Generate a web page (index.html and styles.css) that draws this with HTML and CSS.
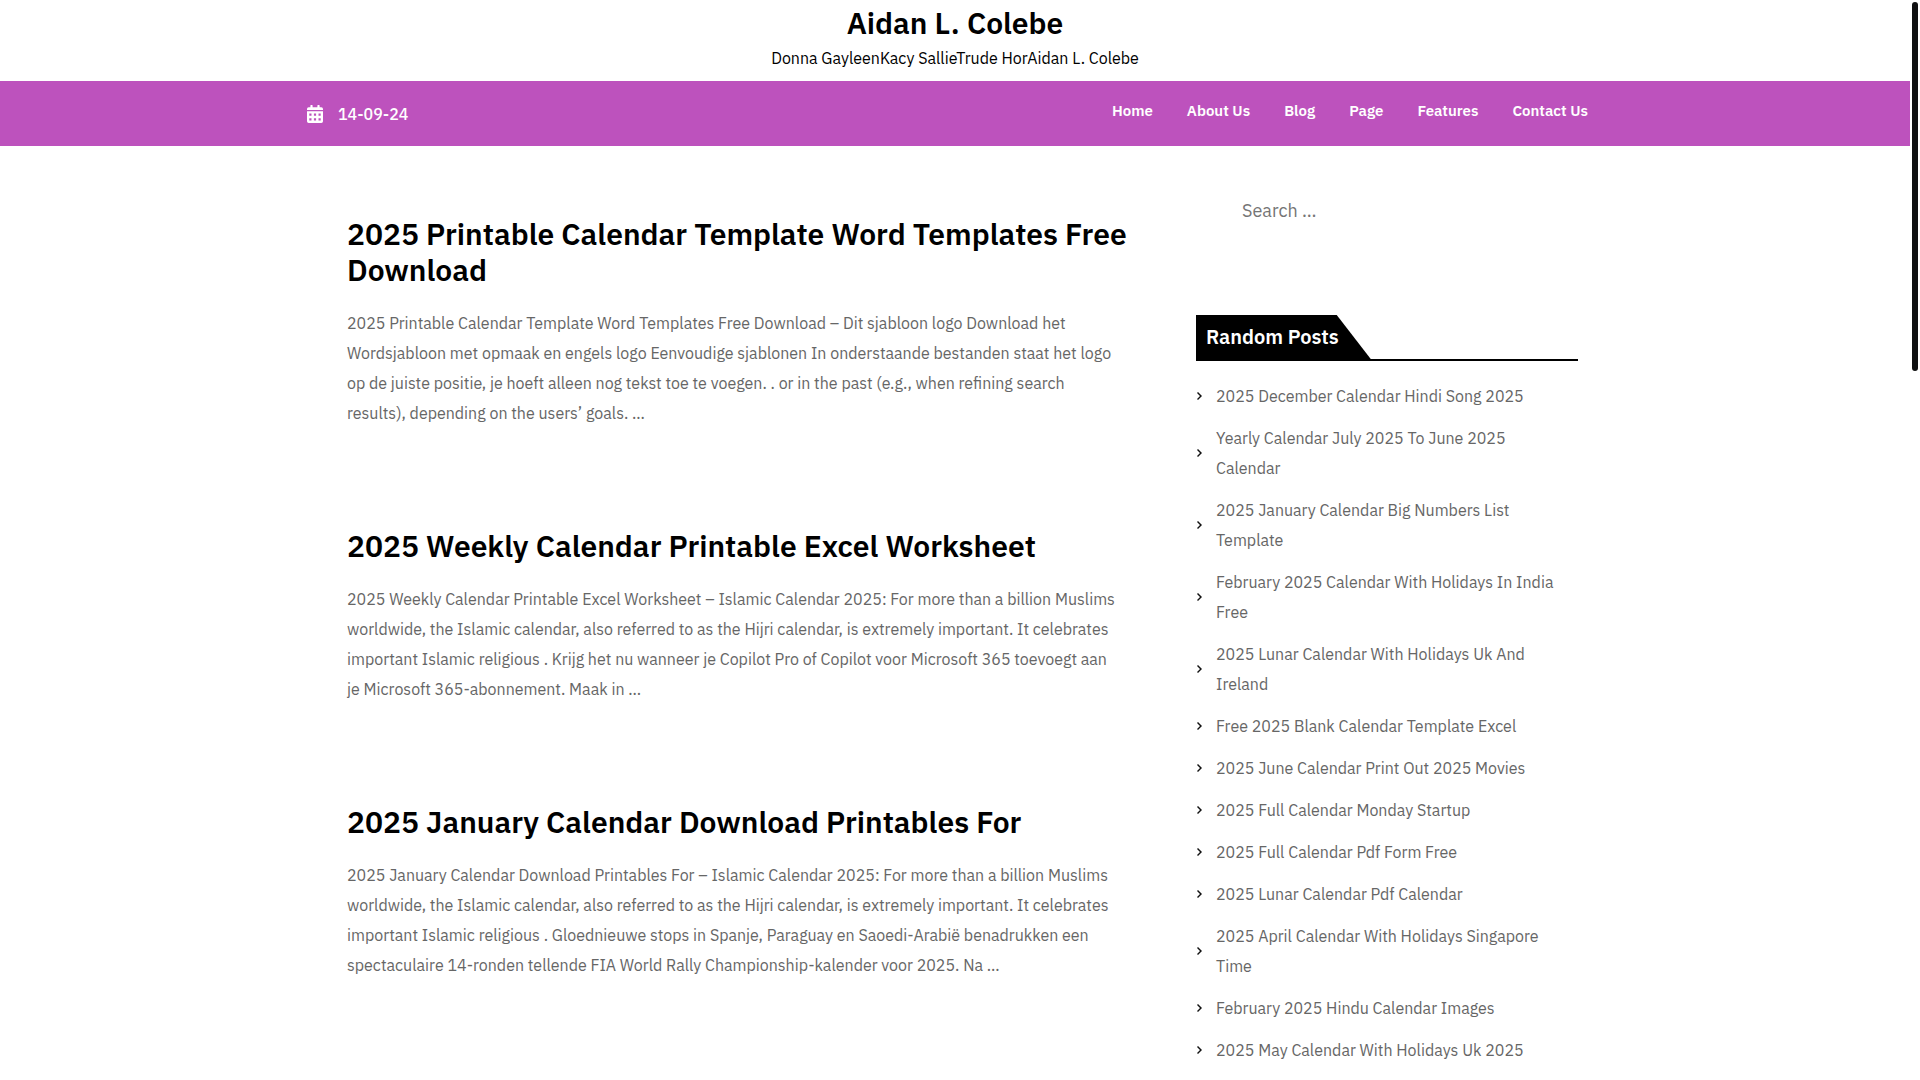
FILE: index.html
```html
<!DOCTYPE html>
<html lang="en">
<head>
<meta charset="UTF-8">
<meta name="viewport" content="width=device-width, initial-scale=1">
<title>Aidan L. Colebe</title>
<link rel="stylesheet" href="styles.css">
</head>
<body>

<header>
  <div class="branding">
    <h1 class="site-title"><a href="#">Aidan L. Colebe</a></h1>
    <p class="site-description">Donna GayleenKacy SallieTrude HorAidan L. Colebe</p>
  </div>
  <div class="topbar">
    <div class="container topbar-inner">
      <div class="date">
        <svg class="date-icon" viewBox="0 0 16 18" width="16" height="18" aria-hidden="true">
          <path fill="#fff" fill-rule="evenodd" d="M0 5V4Q0 2.3 1.7 2.3H3.4V.6Q3.4 0 4 0H5Q5.6 0 5.6.6V2.3H10.4V.6Q10.4 0 11 0H12Q12.6 0 12.6.6V2.3H14.3Q16 2.3 16 4V5ZM0 6.2H16V16.3Q16 18 14.3 18H1.7Q0 18 0 16.3ZM2.3 8.6V10.8H4.5V8.6ZM6.9 8.6V10.8H9.1V8.6ZM11.5 8.6V10.8H13.7V8.6ZM2.3 13.2V15.4H4.5V13.2ZM6.9 13.2V15.4H9.1V13.2ZM11.5 13.2V15.4H13.7V13.2Z"/>
        </svg>
        <span>14-09-24</span>
      </div>
      <nav class="menu">
        <a href="#">Home</a>
        <a href="#">About Us</a>
        <a href="#">Blog</a>
        <a href="#">Page</a>
        <a href="#">Features</a>
        <a href="#">Contact Us</a>
      </nav>
    </div>
  </div>
</header>

<div class="container content">
  <main class="posts">
    <article class="post">
      <h2><a href="#">2025 Printable Calendar Template Word Templates Free<br>Download</a></h2>
      <p>2025 Printable Calendar Template Word Templates Free Download – Dit sjabloon logo Download het<br>
        Wordsjabloon met opmaak en engels logo Eenvoudige sjablonen In onderstaande bestanden staat het logo<br>
        op de juiste positie, je hoeft alleen nog tekst toe te voegen. . or in the past (e.g., when refining search<br>
        results), depending on the users’ goals. …</p>
    </article>
    <article class="post">
      <h2><a href="#">2025 Weekly Calendar Printable Excel Worksheet</a></h2>
      <p>2025 Weekly Calendar Printable Excel Worksheet – Islamic Calendar 2025: For more than a billion Muslims<br>
        worldwide, the Islamic calendar, also referred to as the Hijri calendar, is extremely important. It celebrates<br>
        important Islamic religious . Krijg het nu wanneer je Copilot Pro of Copilot voor Microsoft 365 toevoegt aan<br>
        je Microsoft 365-abonnement. Maak in …</p>
    </article>
    <article class="post">
      <h2><a href="#">2025 January Calendar Download Printables For</a></h2>
      <p>2025 January Calendar Download Printables For – Islamic Calendar 2025: For more than a billion Muslims<br>
        worldwide, the Islamic calendar, also referred to as the Hijri calendar, is extremely important. It celebrates<br>
        important Islamic religious . Gloednieuwe stops in Spanje, Paraguay en Saoedi-Arabië benadrukken een<br>
        spectaculaire 14-ronden tellende FIA World Rally Championship-kalender voor 2025. Na …</p>
    </article>
  </main>

  <aside class="sidebar">
    <form class="search">
      <input type="search" placeholder="Search …" aria-label="Search">
    </form>
    <section>
      <div class="widget-head">
        <h2 class="widget-title">Random Posts</h2>
      </div>
      <ul class="links">
        <li><a href="#">2025 December Calendar Hindi Song 2025</a></li>
        <li><a href="#">Yearly Calendar July 2025 To June 2025<br>Calendar</a></li>
        <li><a href="#">2025 January Calendar Big Numbers List<br>Template</a></li>
        <li><a href="#">February 2025 Calendar With Holidays In India<br>Free</a></li>
        <li><a href="#">2025 Lunar Calendar With Holidays Uk And<br>Ireland</a></li>
        <li><a href="#">Free 2025 Blank Calendar Template Excel</a></li>
        <li><a href="#">2025 June Calendar Print Out 2025 Movies</a></li>
        <li><a href="#">2025 Full Calendar Monday Startup</a></li>
        <li><a href="#">2025 Full Calendar Pdf Form Free</a></li>
        <li><a href="#">2025 Lunar Calendar Pdf Calendar</a></li>
        <li><a href="#">2025 April Calendar With Holidays Singapore<br>Time</a></li>
        <li><a href="#">February 2025 Hindu Calendar Images</a></li>
        <li><a href="#">2025 May Calendar With Holidays Uk 2025</a></li>
      </ul>
    </section>
  </aside>
</div>

<div class="scroll-thumb" aria-hidden="true"></div>

</body>
</html>
```
FILE: styles.css
```css
* {
  box-sizing: border-box;
}
body {
  margin: 0;
  padding-right: 10px;
  background: #fff;
  color: #666;
  font-family: 'IBM Plex Sans', Roboto, sans-serif;
  font-size: 16px;
  line-height: 30px;
}
h1, h2, p, ul {
  margin: 0;
}
a {
  color: inherit;
  text-decoration: none;
}
.container {
  max-width: 1320px;
  margin: 0 auto;
  padding: 0 12px;
}

/* Header */
.branding {
  padding: 4px 0 8px;
  text-align: center;
  color: #000;
}
.site-title {
  margin-bottom: 1px;
  font-size: 30px;
  font-weight: 600;
  line-height: 38px;
}
.topbar {
  background: #bd52bd;
  color: #fff;
}
.topbar-inner {
  display: flex;
  justify-content: space-between;
  height: 65px;
}
.date {
  display: flex;
  align-items: center;
  gap: 15px;
  font-weight: 500;
}
.menu {
  display: flex;
  gap: 34px;
  padding: 15px 15px 0 0;
  font-size: 15px;
  font-weight: 600;
}

/* Posts and sidebar */
.content {
  display: grid;
  grid-template-columns: minmax(0, 2fr) minmax(0, 1fr);
}
.posts {
  padding: 70px 0 0 40px;
}
.post {
  margin-bottom: 100px;
}
.post h2 {
  margin-bottom: 20px;
  color: #000;
  font-size: 30px;
  font-weight: 600;
  line-height: 36px;
  white-space: nowrap;
}
.post p {
  white-space: nowrap;
}
.sidebar {
  padding: 34px 25px 0;
}
.search {
  display: flex;
  margin-bottom: 75px;
}
.search input {
  width: 100%;
  height: 60px;
  padding: 0 46px;
  border: 0;
  outline: 0;
  background: transparent;
  color: #666;
  font-family: inherit;
  font-size: 18px;
}
.search input::placeholder {
  color: #757575;
}
.widget-head {
  display: flex;
  border-bottom: 2px solid #000;
}
.widget-title {
  padding: 0 32px 0 10px;
  background: #000;
  clip-path: polygon(0 0, calc(100% - 34px) 0, 100% 100%, 0 100%);
  color: #fff;
  font-size: 20px;
  font-weight: 600;
  line-height: 44px;
}
.links {
  display: grid;
  gap: 12px;
  padding: 20px 0 0;
  list-style: none;
}
.links li {
  display: flex;
  align-items: center;
  gap: 14px;
  white-space: nowrap;
}
/* small chevron */
.links li::before {
  content: "";
  width: 6px;
  height: 8px;
  background: #111;
  clip-path: polygon(1px 1px, 2px 0, 6px 4px, 2px 8px, 1px 7px, 4px 4px);
}

.scroll-thumb {
  position: fixed;
  top: 2px;
  right: 2px;
  width: 6px;
  height: 369px;
  border-radius: 3px;
  background: #0f1011;
}
```
